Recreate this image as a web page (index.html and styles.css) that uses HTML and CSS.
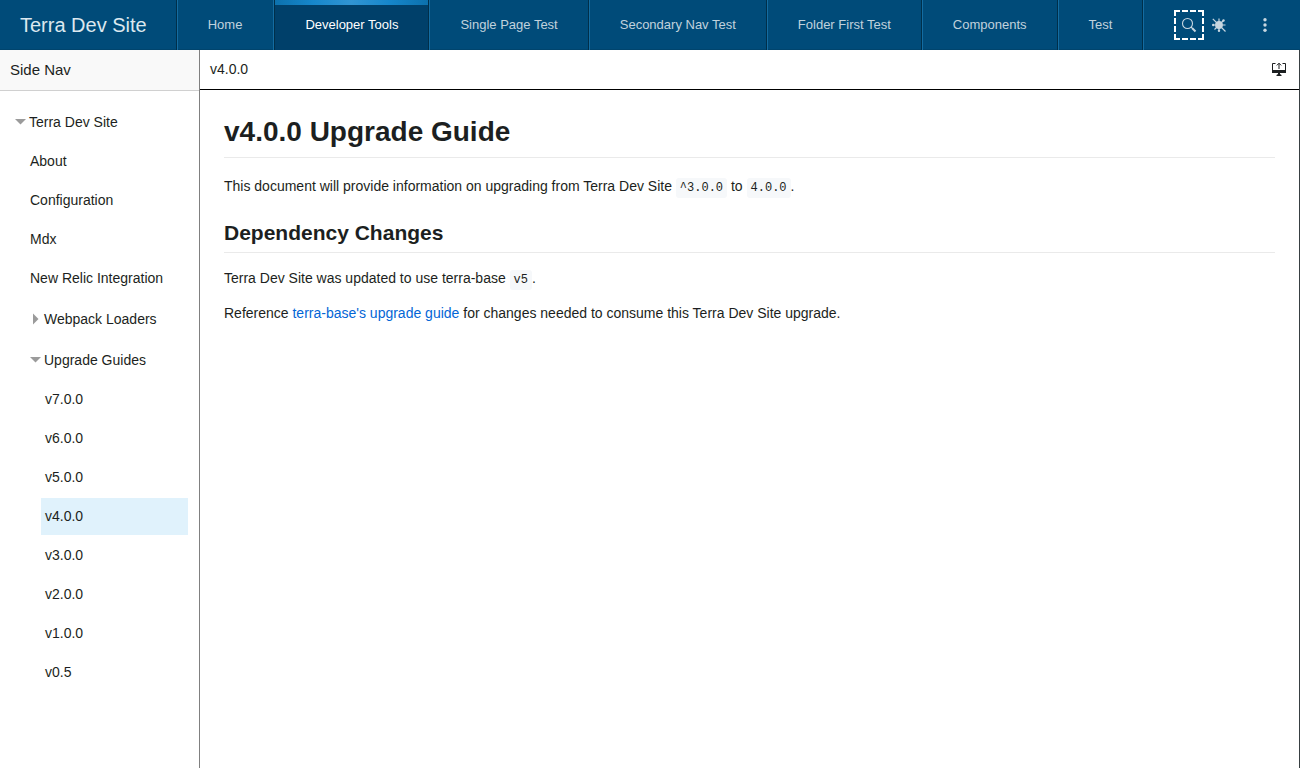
FILE: index.html
```html
<!DOCTYPE html>
<html lang="en">
<head>
<meta charset="utf-8">
<title>Terra Dev Site</title>
<link rel="stylesheet" href="styles.css">
</head>
<body>
<header class="header">
  <div class="brand">Terra Dev Site</div>
  <nav class="tabs" aria-label="Primary">
    <a class="tab" href="#home">Home</a>
    <a class="tab tab-active" href="#developer" aria-current="page">Developer Tools</a>
    <a class="tab" href="#single">Single Page Test</a>
    <a class="tab" href="#secondary">Secondary Nav Test</a>
    <a class="tab" href="#folder">Folder First Test</a>
    <a class="tab" href="#components">Components</a>
    <a class="tab" href="#test">Test</a>
  </nav>
  <div class="tools">
    <button class="tool tool-focus" type="button" aria-label="Search">
      <svg width="14" height="14" viewBox="0 0 14 14" fill="none" stroke="currentColor"><circle cx="5.500" cy="5.500" r="5" stroke-width="1.100"/><path d="M9 9l1.200 1.200"/><path d="M10 10l3.500 3.500" stroke-width="1.900"/></svg>
    </button>
    <button class="tool" type="button" aria-label="Extensions">
      <svg width="14" height="14" viewBox="0 0 14 14" fill="currentColor" stroke="currentColor"><circle cx="7" cy="7" r="3.900" stroke="none"/><path d="M7 7V.5M7 7v6M7 7H1M7 7h6.500M7 7L.8.8M7 7l4.500-4.500M7 7l-4.500 4.500M7 7l6.500 6.500" stroke-width="1.200"/><circle cx="1.200" cy="7" r="1.200" stroke="none"/><circle cx="11.500" cy="2.500" r="1.200" stroke="none"/><circle cx="7" cy="12.800" r="1.200" stroke="none"/></svg>
    </button>
    <button class="tool tool-menu" type="button" aria-label="Menu">
      <svg width="14" height="14" viewBox="0 0 14 14" fill="currentColor"><circle cx="7" cy="1.700" r="1.700"/><circle cx="7" cy="7" r="1.700"/><circle cx="7" cy="12.300" r="1.700"/></svg>
    </button>
  </div>
</header>
<div class="layout">
  <aside class="sidebar">
    <div class="side-title">Side Nav</div>
    <nav class="tree" aria-label="Side Nav">
      <button class="item folder" type="button" aria-expanded="true"><svg class="caret" viewBox="0 0 11 11"><path d="M0 2h11L5.500 7.500z"/></svg>Terra Dev Site</button>
      <div class="level">
        <a class="item" href="#about">About</a>
        <a class="item" href="#configuration">Configuration</a>
        <a class="item" href="#mdx">Mdx</a>
        <a class="item" href="#relic">New Relic Integration</a>
        <button class="item folder" type="button" aria-expanded="false"><svg class="caret" viewBox="0 0 11 11"><path d="M3 -.5v11l5.500-5.500z"/></svg>Webpack Loaders</button>
        <button class="item folder" type="button" aria-expanded="true"><svg class="caret" viewBox="0 0 11 11"><path d="M0 2h11L5.500 7.500z"/></svg>Upgrade Guides</button>
        <div class="level">
          <a class="item" href="#v7">v7.0.0</a>
          <a class="item" href="#v6">v6.0.0</a>
          <a class="item" href="#v5">v5.0.0</a>
          <a class="item item-active" href="#v4" aria-current="page">v4.0.0</a>
          <a class="item" href="#v3">v3.0.0</a>
          <a class="item" href="#v2">v2.0.0</a>
          <a class="item" href="#v1">v1.0.0</a>
          <a class="item" href="#v05">v0.5</a>
        </div>
      </div>
    </nav>
  </aside>
  <main class="main">
    <div class="bar">
      <span>v4.0.0</span>
      <button class="present" type="button" aria-label="Open in modal">
        <svg width="14" height="14" viewBox="0 0 14 14" fill="none" stroke="currentColor"><path d="M3.500 1.500H.5V9M10.500 1.500h3V9M7 7V1.500M4.800 3.400L7 1.200l2.200 2.200"/><path d="M0 8h14v3H0zM6 11h2v1l1.500 1v1h-5v-1L6 12z" fill="currentColor" stroke="none"/></svg>
      </button>
    </div>
    <article class="content">
      <h1>v4.0.0 Upgrade Guide</h1>
      <p>This document will provide information on upgrading from Terra Dev Site <code>^3.0.0</code> to <code>4.0.0</code>.</p>
      <h2>Dependency Changes</h2>
      <p>Terra Dev Site was updated to use terra-base <code>v5</code>.</p>
      <p>Reference <a href="#guide">terra-base's upgrade guide</a> for changes needed to consume this Terra Dev Site upgrade.</p>
    </article>
  </main>
</div>
</body>
</html>
```
FILE: styles.css
```css
* { box-sizing: border-box; }
body {
  margin: 0;
  min-height: 100vh;
  display: flex;
  flex-direction: column;
  font: 14px/20px "Liberation Sans", Arial, sans-serif;
  color: #1c1f21;
  background: #fff;
}
button { font: inherit; color: inherit; background: none; border: 0; padding: 0; }
svg { display: block; overflow: visible; }
.header {
  display: flex;
  height: 50px;
  background: #004b79;
  box-shadow: inset 0 -1px #00446d;
  color: #c8d7e1;
}
.brand {
  padding: 0 29px 0 20px;
  border-right: 1px solid #002f4a;
  font-size: 20px;
  line-height: 50px;
  color: #dce8ef;
  white-space: nowrap;
}
.tabs { display: flex; }
.tab {
  padding: 0 30px;
  border-left: 1px solid #146ca1;
  border-right: 1px solid #002f4a;
  font-size: 13px;
  line-height: 50px;
  color: #c0d2dd;
  text-decoration: none;
  white-space: nowrap;
}
.tab:last-child { box-shadow: 1px 0 #146ca1; }
.tab:has(+ .tab-active) { border-right-color: transparent; }
.tab-active {
  padding-left: 31px;
  box-shadow: inset 1px 0 #002f4a;
  color: #fff;
  background: linear-gradient(90deg, #0c71ad, #1687cb 25%, #3195d3 50%, #1687cb 75%, #0c71ad) top / 100% 5px no-repeat #00406a;
}
.tools {
  display: flex;
  align-items: center;
  margin-left: auto;
  padding-right: 20px;
}
.tool {
  display: grid;
  place-items: center;
  width: 30px;
  height: 30px;
  color: #c8d7e1;
}
.tool-focus { outline: 2px dashed #fff; outline-offset: -2px; }
.tool-menu { margin-left: 16px; }
.layout { display: flex; flex: 1; border-right: 1px solid #383f42; }
.sidebar { width: 200px; flex: none; border-right: 1px solid #808080; }
.side-title {
  padding: 10px;
  border-bottom: 1px solid #d0d0d0;
  background: #f9f9f9;
  font-size: 15px;
}
.tree { padding: 11px; }
.item {
  display: block;
  width: 100%;
  margin-bottom: 2px;
  padding: 8px 4px;
  line-height: 21px;
  color: #1c1f21;
  text-align: left;
  text-decoration: none;
}
.folder { display: flex; align-items: center; gap: 3px; padding: 10px 4px 8px; }
.caret { width: 11px; height: 11px; fill: #9b9b9b; }
.level { padding-left: 15px; }
.item-active { background: #e0f2fc; }
.main { flex: 1; min-width: 0; }
.bar {
  display: flex;
  align-items: center;
  justify-content: space-between;
  height: 40px;
  padding: 0 13px 2px 10px;
  border-bottom: 1px solid #000;
}
.content { padding: 24px; }
h1 {
  margin: 0 0 18px;
  padding-bottom: 8px;
  border-bottom: 1px solid #eaeaea;
  font-size: 28px;
  line-height: 35px;
}
h2 {
  margin: 23px 0 15px;
  padding-bottom: 6px;
  border-bottom: 1px solid #eaeaea;
  font-size: 21px;
  line-height: 26px;
}
p { margin: 0 0 14px; line-height: 21px; }
p a { color: #0366d6; text-decoration: none; }
code {
  padding: 3px 4px;
  border-radius: 3px;
  background: #f6f8fa;
  font: 12px "Liberation Mono", monospace;
}
```
